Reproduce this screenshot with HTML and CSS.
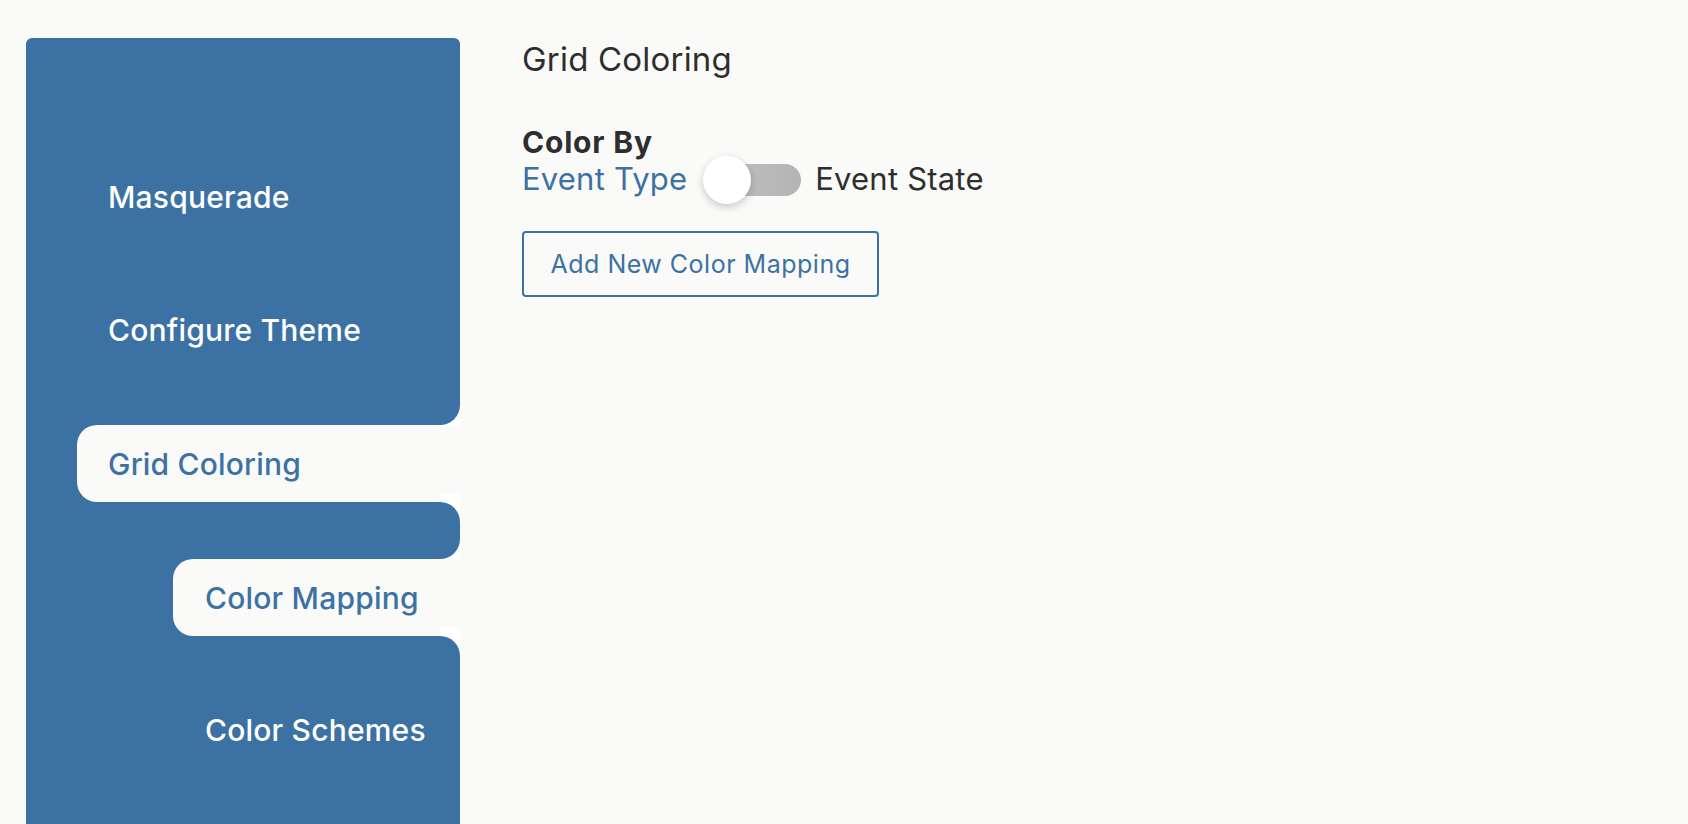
FILE: index.html
```html
<!DOCTYPE html>
<html>
<head>
<meta charset="utf-8">
<link rel="stylesheet" href="styles.css">
</head>
<body>
<div class="page">
  <nav class="sidebar">
    <div class="sb-block sb-first">
      <div class="sb-item">Masquerade</div>
      <div class="sb-item">Configure Theme</div>
    </div>
    <div class="sb-row sb-row-l1">
      <div class="sb-tab tab-l1">Grid Coloring</div>
    </div>
    <div class="sb-block sb-mid"></div>
    <div class="sb-row sb-row-l2">
      <div class="sb-tab tab-l2">Color Mapping</div>
    </div>
    <div class="sb-block sb-last">
      <div class="sb-item sb-sub">Color Schemes</div>
    </div>
  </nav>
  <main class="content">
    <h1 class="title">Grid Coloring</h1>
    <div class="label">Color By</div>
    <div class="toggle-line">
      <span class="opt opt-on">Event Type</span>
      <span class="switch"><span class="track"></span><span class="knob"></span></span>
      <span class="opt">Event State</span>
    </div>
    <button class="btn">Add New Color Mapping</button>
  </main>
</div>
</body>
</html>
```
FILE: styles.css
```css
* { box-sizing: border-box; }
html, body { margin: 0; padding: 0; }
body {
  background: #fafaf9;
  font-family: Inter, "Noto Sans", sans-serif;
  color: #323232;
  width: 1688px;
  height: 824px;
  overflow: hidden;
}
.page {
  display: flex;
  padding-left: 26px;
  padding-top: 38px;
  height: 824px;
}
.sidebar {
  width: 434px;
  display: flex;
  flex-direction: column;
  flex: none;
}
.sb-block {
  background: #3c72a3;
  position: relative;
  z-index: 1;
}
.sb-first {
  height: 387px;
  padding-top: 92px;
  border-radius: 6px 6px 20px 0;
}
.sb-mid {
  height: 57px;
  border-radius: 0 20px 20px 0;
}
.sb-last {
  flex: 1;
  padding-top: 27px;
  border-radius: 0 20px 0 0;
}
.sb-item {
  height: 133px;
  display: flex;
  align-items: center;
  padding-left: 82px;
  color: #ffffff;
  font-size: 30px;
  font-weight: 500;
  letter-spacing: 0.2px;
}
.sb-sub { padding-left: 179px; }
.sb-row {
  height: 77px;
  background: #3c72a3;
  display: flex;
}
.sb-row-l1 { padding-left: 51px; }
.sb-row-l2 { padding-left: 147px; }
.sb-tab {
  flex: 1;
  background: #fafaf9;
  border-radius: 20px 0 0 20px;
  display: flex;
  align-items: center;
  padding-left: 31px;
  color: #3c72a3;
  font-size: 30px;
  font-weight: 500;
  letter-spacing: 0.2px;
  position: relative;
}
.tab-l2 { padding-left: 32px; }
.sb-tab::after {
  content: "";
  position: absolute;
  right: 0;
  width: 20px;
  top: 68px;
  background: #ffffff;
  z-index: 0;
}
.tab-l1::after { height: 67px; }
.tab-l2::after { height: 30px; }
.tab-l1::before {
  content: "";
  position: absolute;
  right: 0;
  width: 20px;
  top: -20px;
  height: 22px;
  background: #ffffff;
  z-index: 0;
}
.content {
  padding-left: 62px;
  display: flex;
  flex-direction: column;
  align-items: flex-start;
}
.title {
  margin: 0;
  font-size: 33px;
  font-weight: 400;
  line-height: 42px;
  letter-spacing: 0.2px;
  color: #2e2e2e;
}
.label {
  margin-top: 48px;
  font-size: 30px;
  font-weight: 700;
  line-height: 28px;
  letter-spacing: 0.8px;
  color: #2e2e2e;
}
.toggle-line {
  display: flex;
  align-items: center;
  height: 48px;
}
.opt {
  font-size: 31px;
  line-height: 40px;
  letter-spacing: 0.2px;
  padding-bottom: 3px;
  color: #2e2e2e;
}
.opt-on { color: #3c72a3; }
.switch {
  position: relative;
  width: 98px;
  height: 48px;
  margin: 0 14px 0 16px;
  display: inline-block;
}
.track {
  position: absolute;
  left: 4px;
  right: 0;
  top: 8px;
  height: 32px;
  border-radius: 16px;
  background: linear-gradient(to right, #c2c2c2, #b4b4b4);
}
.knob {
  position: absolute;
  left: 0;
  top: 0;
  width: 48px;
  height: 48px;
  border-radius: 50%;
  background: #ffffff;
  box-shadow: 0 3px 9px rgba(0,0,0,0.2);
}
.btn {
  margin-top: 27px;
  width: 357px;
  height: 66px;
  padding: 0;
  border: 2px solid #3c72a3;
  border-radius: 4px;
  background: transparent;
  color: #3c72a3;
  font-family: Inter, sans-serif;
  font-size: 25px;
  letter-spacing: 0.5px;
}
```
